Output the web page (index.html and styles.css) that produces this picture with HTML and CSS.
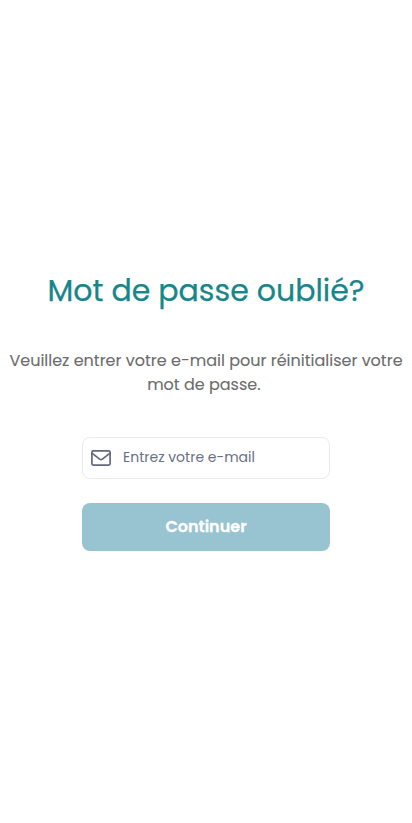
FILE: index.html
```html
<!DOCTYPE html>
<html lang="fr">
<head>
<meta charset="utf-8">
<meta name="viewport" content="width=device-width, initial-scale=1">
<title>Mot de passe oublié?</title>
<link rel="stylesheet" href="styles.css">
</head>
<body>
<main class="page">
  <h1 class="title">Mot de passe oublié?</h1>
  <p class="intro"><span class="line">Veuillez entrer votre e-mail pour réinitialiser votre</span> <span class="line">mot de passe.&nbsp;</span></p>
  <form class="form">
    <label class="field">
      <svg class="icon" viewBox="0 0 20 16" aria-hidden="true"><rect x=".9" y=".9" width="18.2" height="14.2" rx="1.3"/><path d="M1 3.2 8.6 9.2Q10 10.3 11.4 9.2L19 3.2"/></svg>
      <input class="input" type="email" placeholder="Entrez votre e-mail">
    </label>
    <button class="button" type="button">Continuer</button>
  </form>
</main>
</body>
</html>
```

FILE: styles.css
```css
* { box-sizing: border-box; }
body {
  margin: 0;
  background: #fff;
  font-family: Poppins, Inter, "Liberation Sans", sans-serif;
}
.page {
  min-height: 823px;
  display: flex;
  flex-direction: column;
  align-items: center;
  padding-top: 267px;
}
.title {
  margin: 0;
  font-size: 30px;
  line-height: 48px;
  font-weight: 400;
  color: #17868b;
  -webkit-text-stroke: 0.25px #17868b;
  white-space: nowrap;
}
.intro {
  margin: 34px 0 0;
  font-size: 16px;
  line-height: 24px;
  color: #6c6c6c;
  -webkit-text-stroke: 0.1px #6c6c6c;
  text-align: center;
}
.line { display: block; white-space: nowrap; }
.form {
  width: 248px;
  margin-top: 40px;
  display: flex;
  flex-direction: column;
  gap: 24px;
}
.field {
  height: 42px;
  display: flex;
  align-items: center;
  gap: 12px;
  padding: 0 8px;
  border: 1px solid #e9ecef;
  border-radius: 8px;
}
.icon {
  width: 20px;
  height: 16px;
  flex: none;
  fill: none;
  stroke: #62697b;
  stroke-width: 1.7;
}
.input {
  min-width: 0;
  flex: 1;
  padding: 0 0 2px;
  border: 0;
  outline: 0;
  background: none;
  font: 400 14px/20px Poppins, Inter, sans-serif;
}
.input::placeholder { color: #687082; opacity: 1; }
.button {
  height: 48px;
  border: 0;
  border-radius: 8px;
  background: #98c4d1;
  color: #fff;
  font: 600 16px/24px Poppins, Inter, sans-serif;
  -webkit-text-stroke: 0.3px #fff;
}
```
